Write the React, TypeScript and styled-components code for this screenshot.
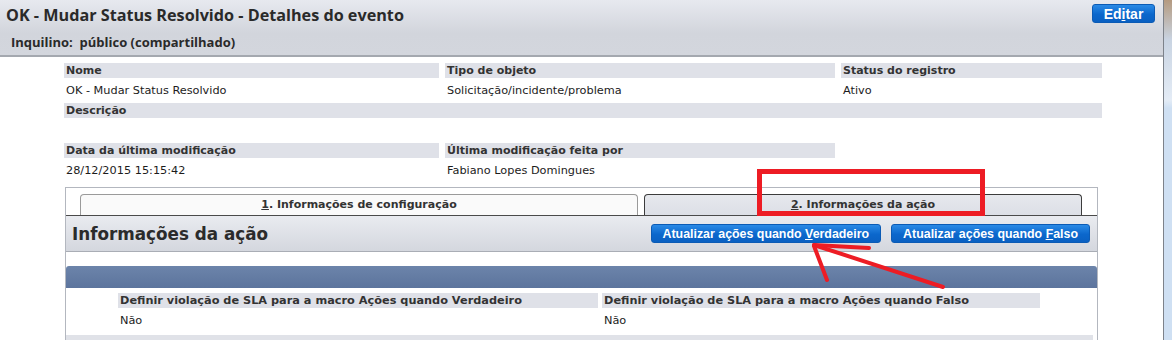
import styled, { createGlobalStyle } from 'styled-components';

const GlobalStyle = createGlobalStyle`
  html, body { margin: 0; padding: 0; background: #fff; }
  body { font-family: "DejaVu Sans", Verdana, sans-serif; }
`;

type Field = { label: string; value: string; span?: number };

const fieldRows: Field[][] = [
  [
    { label: 'Nome', value: 'OK - Mudar Status Resolvido' },
    { label: 'Tipo de objeto', value: 'Solicitação/incidente/problema' },
    { label: 'Status do registro', value: 'Ativo' },
  ],
  [{ label: 'Descrição', value: '', span: 3 }],
  [
    { label: 'Data da última modificação', value: '28/12/2015 15:15:42' },
    { label: 'Última modificação feita por', value: 'Fabiano Lopes Domingues' },
  ],
];

const slaFields: Field[] = [
  { label: 'Definir violação de SLA para a macro Ações quando Verdadeiro', value: 'Não' },
  { label: 'Definir violação de SLA para a macro Ações quando Falso', value: 'Não' },
];

export default function App() {
  return (
    <Page>
      <GlobalStyle />
      <Main>
        <Header>
          <Title>OK - Mudar Status Resolvido - Detalhes do evento</Title>
          <EditButton>
            Ed<u>i</u>tar
          </EditButton>
          <Tenant>Inquilino:&nbsp; público (compartilhado)</Tenant>
        </Header>

        <Fields>
          {fieldRows.map((row) =>
            row.map((f) => (
              <FieldCell key={f.label} $span={f.span}>
                <Label>{f.label}</Label>
                <Value>{f.value}</Value>
              </FieldCell>
            ))
          )}
        </Fields>

        <TabBox>
          <TabRow>
            <Tab $width={558}>
              <u>1</u>. Informações de configuração
            </Tab>
            <Tab $width={438} $active>
              <u>2</u>. Informações da ação
            </Tab>
          </TabRow>
          <SectionHeader>
            <SectionTitle>Informações da ação</SectionTitle>
            <ButtonGroup>
              <ActionButton>
                Atualizar ações quando <u>V</u>erdadeiro
              </ActionButton>
              <ActionButton>
                Atualizar ações quando <u>F</u>also
              </ActionButton>
            </ButtonGroup>
          </SectionHeader>
          <BlueBar />
          <SlaGrid>
            {slaFields.map((f) => (
              <FieldCell key={f.label}>
                <SlaLabel>{f.label}</SlaLabel>
                <Value>{f.value}</Value>
              </FieldCell>
            ))}
          </SlaGrid>
          <FooterBar />
        </TabBox>
      </Main>
      <Scrollbar />

      <Annotation width="1172" height="340" viewBox="0 0 1172 340">
        <rect x="759.5" y="171.5" width="223" height="42" fill="none" stroke="#ed1c24" strokeWidth="5" />
        <g stroke="#ed1c24" strokeWidth="4" strokeLinecap="round" fill="none">
          <path d="M814 245 L943 287" />
          <path d="M814 245 L869 248" />
          <path d="M814 246 L827 280" />
        </g>
      </Annotation>
    </Page>
  );
}

const Page = styled.div`
  position: relative;
  display: flex;
  width: 1172px;
  height: 340px;
  overflow: hidden;
`;

const Main = styled.div`
  flex: 1;
  min-width: 0;
`;

const Header = styled.header`
  box-sizing: border-box;
  height: 57px;
  display: grid;
  grid-template-columns: 1fr auto;
  grid-template-rows: 27px auto;
  align-items: center;
  padding: 1px 8px 0 6px;
  background: linear-gradient(#e7e9ef, #d2d5dc 60%, #d3d6dd);
  border-bottom: 2px solid #a4a8af;
  font-family: "Open Sans", sans-serif;
  color: #2a2a2a;
`;

const Title = styled.h1`
  margin: 0;
  font-size: 16.2px;
  font-weight: 700;
`;

const EditButton = styled.button`
  box-sizing: border-box;
  width: 63px;
  height: 19px;
  align-self: start;
  margin-top: 3px;
  padding: 0;
  border: 1px solid #0b5bb5;
  border-radius: 3px;
  background: linear-gradient(#2a8ae6, #0b67cc 55%, #0a60c2);
  color: #fff;
  font-family: "Liberation Sans", Arial, sans-serif;
  font-size: 14px;
  font-weight: 700;
`;

const Tenant = styled.div`
  grid-column: 1 / -1;
  padding-left: 5px;
  margin-top: 1px;
  font-size: 13px;
  font-weight: 700;
`;

const Fields = styled.div`
  display: grid;
  grid-template-columns: 375px 390px 261px;
  column-gap: 6px;
  margin: 6px 0 0 64px;
`;

const FieldCell = styled.div<{ $span?: number }>`
  grid-column: span ${(p) => p.$span ?? 1};
`;

const Label = styled.div`
  height: 15px;
  line-height: 15px;
  padding-left: 2px;
  background: #dfe1e8;
  color: #333;
  font-size: 11px;
  font-weight: 700;
  white-space: nowrap;
`;

const SlaLabel = styled(Label)`
  font-size: 11.3px;
`;

const Value = styled.div`
  height: 25px;
  line-height: 26px;
  padding-left: 2px;
  color: #1c1c1c;
  font-size: 11.3px;
  white-space: nowrap;
`;

const TabBox = styled.div`
  box-sizing: border-box;
  width: 1033px;
  height: 200px;
  margin: 4px 0 0 65px;
  border: 1px solid #b3b7bf;
  border-bottom: none;
`;

const TabRow = styled.div`
  display: flex;
  gap: 6px;
  padding: 6px 0 0 14px;
  border-bottom: 1px solid #4a4a4a;
`;

const Tab = styled.div<{ $width: number; $active?: boolean }>`
  box-sizing: border-box;
  width: ${(p) => p.$width}px;
  height: 21px;
  line-height: 20px;
  text-align: center;
  border: 1px solid ${(p) => (p.$active ? '#3c3c3c' : '#9a9a9a')};
  border-bottom: none;
  border-radius: 4px 4px 0 0;
  background: ${(p) => (p.$active ? 'linear-gradient(#e6e8ed, #dcdfe6)' : '#fafafa')};
  color: #333;
  font-size: 11px;
  font-weight: 700;
`;

const SectionHeader = styled.div`
  box-sizing: border-box;
  height: 36px;
  display: flex;
  align-items: center;
  justify-content: space-between;
  padding: 0 7px 0 6px;
  background: linear-gradient(#e9ebf0, #d4d7de);
  border-bottom: 1px solid #a9adb5;
`;

const SectionTitle = styled.h2`
  margin: 0;
  font-size: 16.8px;
  font-weight: 700;
  color: #2b2b2b;
`;

const ButtonGroup = styled.div`
  display: flex;
  gap: 10px;
`;

const ActionButton = styled.button`
  box-sizing: border-box;
  height: 19px;
  padding: 0 11px;
  border: 1px solid #0b5bb5;
  border-radius: 3px;
  background: linear-gradient(#2a8ae6, #0b67cc 55%, #0a60c2);
  color: #fff;
  font-family: "Liberation Sans", Arial, sans-serif;
  font-size: 12.4px;
  font-weight: 700;
  white-space: nowrap;
`;

const BlueBar = styled.div`
  height: 22px;
  margin-top: 14px;
  border-radius: 3px 3px 0 0;
  background: linear-gradient(#6c84aa, #5c749d);
`;

const SlaGrid = styled.div`
  display: grid;
  grid-template-columns: 480px 438px;
  column-gap: 4px;
  margin: 5px 0 0 52px;
`;

const FooterBar = styled.div`
  height: 12px;
  margin: 2px 4px 0 0;
  background: #e0e2e8;
`;

const Scrollbar = styled.div`
  box-sizing: border-box;
  width: 9px;
  height: 100%;
  border-left: 1px solid #7d828a;
  background: linear-gradient(#b49a80 0, #c9d4e2 40px, #e4ecf6 100px, #cfe0f3 108px, #cfe0f3 100%);
`;

const Annotation = styled.svg`
  position: absolute;
  left: 0;
  top: 0;
  pointer-events: none;
`;
